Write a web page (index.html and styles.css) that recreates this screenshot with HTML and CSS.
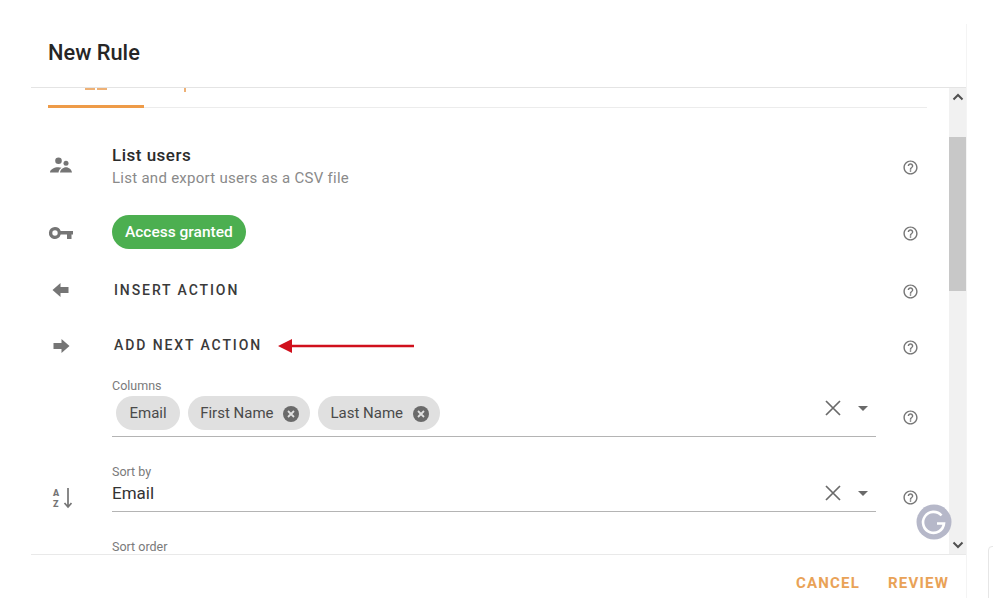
FILE: index.html
```html
<!DOCTYPE html>
<html lang="en">
<head>
<meta charset="utf-8">
<title>New Rule</title>
<link rel="stylesheet" href="styles.css">
</head>
<body>
<svg class="defs" width="0" height="0" aria-hidden="true">
  <symbol id="help" viewBox="0 0 24 24"><path d="M11 18h2v-2h-2v2zm1-16C6.48 2 2 6.48 2 12s4.48 10 10 10 10-4.48 10-10S17.52 2 12 2zm0 18c-4.41 0-8-3.59-8-8s3.59-8 8-8 8 3.59 8 8-3.59 8-8 8zm0-14c-2.21 0-4 1.79-4 4h2c0-1.1.9-2 2-2s2 .9 2 2c0 2-3 1.75-3 5h2c0-2.25 3-2.5 3-5 0-2.21-1.79-4-4-4z"/></symbol>
  <symbol id="clear" viewBox="0 0 16 16"><path d="M1 1l14 14M15 1L1 15" fill="none" stroke="currentColor" stroke-width="1.7"/></symbol>
  <symbol id="caret" viewBox="0 0 10 5"><path d="M0 0h10L5 5z"/></symbol>
  <symbol id="chip-x" viewBox="0 0 16 16"><circle cx="8" cy="8" r="8"/><path d="M5 5l6 6M11 5l-6 6" fill="none" stroke="#e0e0e0" stroke-width="1.8"/></symbol>
</svg>
<div class="dialog">
  <header class="dialog-head"><h1 class="dialog-title">New Rule</h1></header>
  <div class="dialog-body">
    <div class="scroll-content">
      <div class="tabs">
        <div class="tab tab-active"><svg class="tab-frag" width="22" height="3" viewBox="0 0 22 3"><path d="M0 0h10v2H0zM12 0h10v2H12z"/></svg></div>
        <div class="tab"><svg class="tab-frag" width="2" height="4" viewBox="0 0 2 4"><path d="M0 0h2v4H0z"/></svg></div>
      </div>

      <div class="row row-list">
        <span class="row-icon"><svg width="24" height="24" viewBox="0 0 24 24"><circle cx="9.5" cy="6.8" r="3.3"/><circle cx="17" cy="9.3" r="2.5"/><path d="M1 18.5c0-3.2 4.5-5.2 8.300-5.200 1.200 0 2.300.2 3.200.5-1.700 1.200-2.700 2.800-3 4.700zM11 18.500c.3-3 3.200-5.300 6-5.300 2.900 0 5.700 2.300 6 5.300z"/></svg></span>
        <div class="row-main">
          <div class="list-title">List users</div>
          <div class="list-sub">List and export users as a CSV file</div>
        </div>
        <svg class="help"><use href="#help"/></svg>
      </div>

      <div class="row row-access">
        <span class="row-icon"><svg width="26" height="24" viewBox="0 0 26 24"><path fill-rule="evenodd" d="M7 7a6 6 0 0 1 5.700 4H25v3.500h-1.500V19h-4.500v-4.500h-6.300A6 6 0 1 1 7 7zm0 3.300a2.700 2.700 0 1 0 0 5.400 2.700 2.700 0 0 0 0-5.400z"/></svg></span>
        <div class="row-main"><span class="pill">Access granted</span></div>
        <svg class="help"><use href="#help"/></svg>
      </div>

      <div class="row row-action">
        <span class="row-icon"><svg width="20" height="16" viewBox="0 0 20 16"><path d="M1.500 8L9.500 1v4h8v6h-8v4z"/></svg></span>
        <div class="row-main"><span class="action-label">INSERT ACTION</span></div>
        <svg class="help"><use href="#help"/></svg>
      </div>

      <div class="row row-action">
        <span class="row-icon"><svg width="20" height="16" viewBox="0 0 20 16"><path d="M18.500 8L10.500 1v4h-8v6h8v4z"/></svg></span>
        <div class="row-main row-inline">
          <span class="action-label">ADD NEXT ACTION</span>
          <svg class="red-arrow" width="136" height="14" viewBox="0 0 136 14"><path d="M0 7L14 0v5.800h122v2.400H14V14z"/></svg>
        </div>
        <svg class="help"><use href="#help"/></svg>
      </div>

      <div class="row row-field">
        <span class="row-icon"></span>
        <div class="field">
          <div class="field-label">Columns</div>
          <div class="field-input input-chips">
            <div class="chips">
              <span class="chip">Email</span>
              <span class="chip chip-del">First Name<svg class="chip-close"><use href="#chip-x"/></svg></span>
              <span class="chip chip-del">Last Name<svg class="chip-close"><use href="#chip-x"/></svg></span>
            </div>
            <div class="field-actions"><svg class="clear"><use href="#clear"/></svg><svg class="caret"><use href="#caret"/></svg></div>
          </div>
        </div>
        <svg class="help help-chips"><use href="#help"/></svg>
      </div>

      <div class="row row-field row-sort">
        <span class="row-icon sort-icon"><svg width="22" height="24" viewBox="0 0 22 24"><text class="sort-letter" x="3" y="11">A</text><text class="sort-letter" x="3" y="21.600">Z</text><path d="M18 3v18M14.500 18l3.500 4 3.500-4" fill="none" stroke="#757575" stroke-width="1.700"/></svg></span>
        <div class="field">
          <div class="field-label">Sort by</div>
          <div class="field-input input-value">
            <span class="value">Email</span>
            <div class="field-actions"><svg class="clear"><use href="#clear"/></svg><svg class="caret"><use href="#caret"/></svg></div>
          </div>
        </div>
        <svg class="help help-sort"><use href="#help"/></svg>
      </div>

      <div class="row row-order">
        <span class="row-icon"></span>
        <div class="field"><div class="field-label">Sort order</div></div>
      </div>
    </div>
    <div class="scrollbar">
      <svg class="scroll-btn" width="12" height="8" viewBox="0 0 12 8"><path d="M1.500 6.500L6 2l4.500 4.500" fill="none" stroke="#505050" stroke-width="2"/></svg>
      <div class="scroll-thumb"></div>
      <svg class="scroll-btn scroll-btn-down" width="12" height="8" viewBox="0 0 12 8"><path d="M1.500 1.500L6 6l4.500-4.500" fill="none" stroke="#505050" stroke-width="2"/></svg>
    </div>
  </div>
  <footer class="dialog-foot">
    <span class="foot-btn">CANCEL</span>
    <span class="foot-btn">REVIEW</span>
  </footer>
</div>
<div class="g-badge"><svg width="36" height="36" viewBox="0 0 36 36"><circle cx="18" cy="18" r="17.500" fill="#b6b8c9"/><path d="M25.500 11.500A10.500 10.500 0 1 0 28 19.500h-7" fill="none" stroke="#fff" stroke-width="2.600"/></svg></div>
<div class="corner-box"></div>
</body>
</html>
```
FILE: styles.css
```css
* { box-sizing: border-box; }
html, body { margin: 0; height: 598px; overflow: hidden; background: #fff; }
body { font-family: Roboto, "Liberation Sans", sans-serif; color: #2b2b2b; position: relative; }
.defs { display: block; height: 0; }

.dialog { margin: 24px 0 0 31px; width: 936px; height: 574px; display: flex; flex-direction: column; border-right: 1px solid #f4f4f4; }
.dialog-head { height: 64px; flex: none; padding-left: 17px; border-bottom: 1px solid #e4e4e4; display: flex; align-items: center; }
.dialog-title { margin: 0 0 6px; font-size: 21.800px; line-height: 28px; font-weight: 500; color: #262626; }

.dialog-body { flex: 1; min-height: 0; display: flex; }
.scroll-content { flex: 1; min-width: 0; overflow: hidden; padding: 0 22px 0 17px; }

.tabs { height: 20px; display: flex; border-bottom: 1.500px solid #ececec; }
.tab { width: 96px; height: 19.500px; }
.tab-active { border-bottom: 3px solid #ee9b48; }
.tab-frag { display: block; fill: #eeb176; margin-left: 37px; }
.tab + .tab .tab-frag { margin-left: 40px; }

.row { display: grid; grid-template-columns: 64px 764px 1fr; align-items: center; }
.row-icon { display: flex; justify-content: center; width: 26px; fill: #757575; }
.row-list { margin-top: 35px; height: 46px; }
.row-access { margin-top: 26px; height: 34px; }
.row-action { margin-top: 26px; height: 30px; }
.row-field { margin-top: 17px; }
.row-sort { margin-top: 27px; }
.row-order { margin-top: 27px; }
.sort-icon { align-self: end; margin-bottom: 3px; }

.list-title { font-size: 17px; line-height: 24px; font-weight: 500; color: #2b2b2b; letter-spacing: .5px; }
.list-sub { font-size: 15px; line-height: 22px; color: #8a8a8a; letter-spacing: .27px; }

.pill { display: inline-flex; align-items: center; height: 34px; padding: 0 13px; border-radius: 17px; background: #4caf50; color: #fff; font-size: 15.500px; font-weight: 500; }

.action-label { font-size: 14px; font-weight: 500; letter-spacing: 1.900px; color: #3a3a3a; margin-left: 2px; position: relative; top: -1px; }
.row-inline { display: flex; align-items: center; gap: 16px; }
.red-arrow { fill: #d0101c; }

.help { width: 17px; height: 17px; margin: 2px 0 0 26px; fill: #757575; }
.help-chips { align-self: end; margin-bottom: 11px; }
.help-sort { align-self: end; margin-bottom: 6px; }

.field-label { font-size: 12.500px; line-height: 16px; color: #7a7a7a; }
.field-input { display: flex; align-items: center; justify-content: space-between; border-bottom: 1.500px solid #b4b4b4; }
.input-chips { margin-top: 2px; padding: 0 0 6px 4px; }
.input-value { padding-bottom: 6px; margin-top: 1px; }
.chips { display: flex; gap: 8px; }
.chip { display: inline-flex; align-items: center; height: 34px; padding: 0 13px 0 13.500px; border-radius: 17px; background: #e0e0e0; color: #4a4a4a; font-size: 15px; }
.chip-del { padding: 0 11px 0 12.500px; gap: 9.500px; }
.chip-close { width: 16px; height: 16px; fill: #6a6a6a; margin-top: 1px; }
.value { font-size: 17px; line-height: 24px; color: #333; }

.field-actions { display: flex; align-items: center; gap: 17px; padding-right: 8px; }
.input-chips .field-actions { margin-top: -10px; }
.clear { width: 16px; height: 16px; color: #6a6a6a; }
.caret { width: 10px; height: 5px; fill: #6a6a6a; }

.sort-letter { font-family: Roboto, sans-serif; font-size: 9px; font-weight: 900; fill: #757575; }

.scrollbar { width: 17px; flex: none; background: #f1f1f1; display: flex; flex-direction: column; align-items: center; padding-top: 5px; }
.scroll-btn { flex: none; display: block; }
.scroll-thumb { align-self: stretch; height: 154px; margin-top: 36px; background: #c8c8c8; }
.scroll-btn-down { margin-top: 250px; }

.dialog-foot { height: 44px; flex: none; border-top: 1.500px solid #e9e9e9; display: flex; justify-content: flex-end; align-items: center; gap: 28px; padding: 12px 17px 0 0; }
.foot-btn { font-size: 15px; font-weight: 700; letter-spacing: 1.200px; color: #e9a257; }

.g-badge { position: absolute; left: 916px; top: 504px; width: 36px; height: 36px; }
.g-badge svg { display: block; }
.corner-box { position: absolute; left: 988px; top: 546px; width: 30px; height: 70px; border: 1px solid #e6e6e6; border-radius: 4px; }
```
